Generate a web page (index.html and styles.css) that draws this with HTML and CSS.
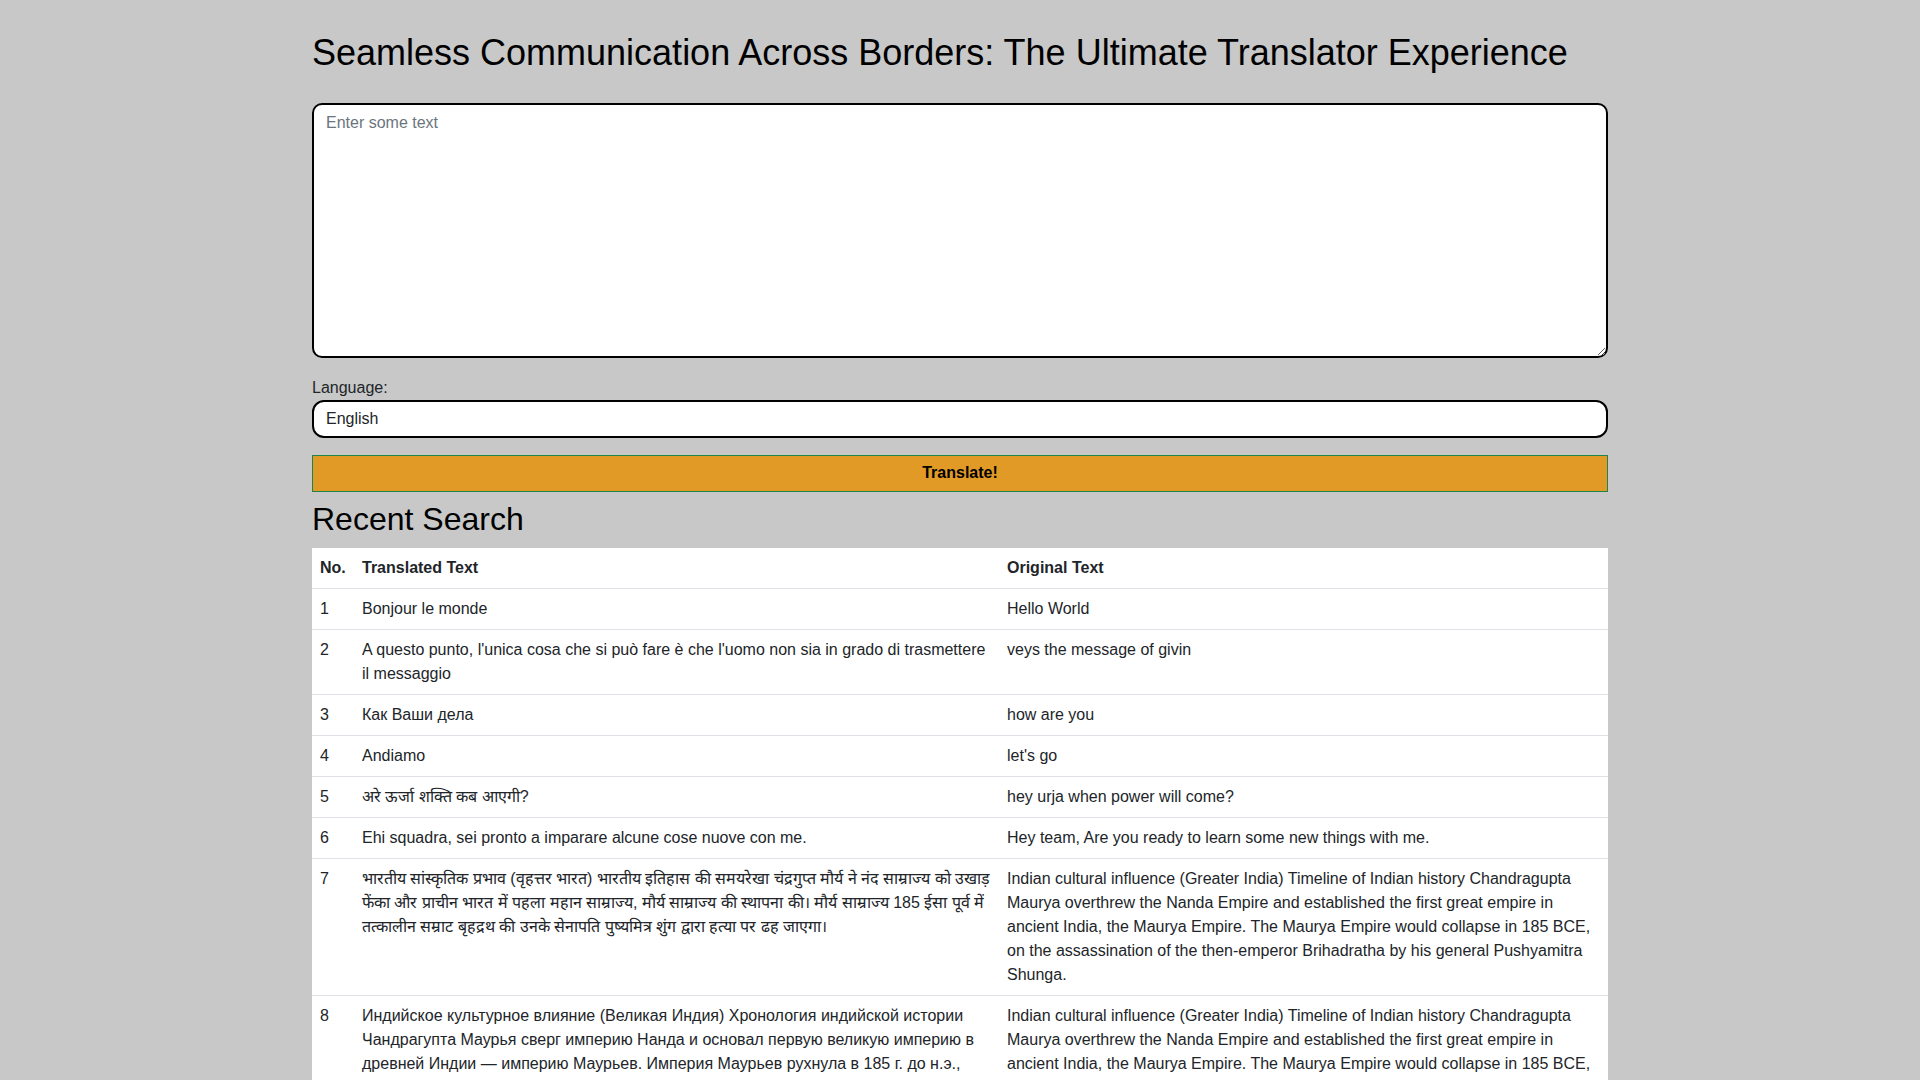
FILE: index.html
```html
<!DOCTYPE html>
<html lang="en">
<head>
<meta charset="utf-8">
<title>Translator</title>
<link rel="stylesheet" href="styles.css">
</head>
<body>
<main class="container">
  <h1 class="title">Seamless Communication Across Borders: The Ultimate Translator Experience</h1>
  <form class="translate-form">
    <textarea class="text-input" placeholder="Enter some text"></textarea>
    <label class="lang-label" for="lang">Language:</label>
    <input class="lang-input" id="lang" type="text" value="English">
    <button class="translate-btn" type="button">Translate!</button>
  </form>
  <h2 class="section-title">Recent Search</h2>
  <table class="history">
    <thead>
      <tr><th class="col-no">No.</th><th class="col-tr">Translated Text</th><th>Original Text</th></tr>
    </thead>
    <tbody>
      <tr><td>1</td><td>Bonjour le monde</td><td>Hello World</td></tr>
      <tr><td>2</td><td>A questo punto, l'unica cosa che si può fare è che l'uomo non sia in grado di trasmettere il messaggio</td><td>veys the message of givin</td></tr>
      <tr><td>3</td><td>Как Ваши дела</td><td>how are you</td></tr>
      <tr><td>4</td><td>Andiamo</td><td>let's go</td></tr>
      <tr><td>5</td><td>अरे ऊर्जा शक्ति कब आएगी?</td><td>hey urja when power will come?</td></tr>
      <tr><td>6</td><td>Ehi squadra, sei pronto a imparare alcune cose nuove con me.</td><td>Hey team, Are you ready to learn some new things with me.</td></tr>
      <tr><td>7</td><td>भारतीय सांस्कृतिक प्रभाव (वृहत्तर भारत) भारतीय इतिहास की समयरेखा चंद्रगुप्त मौर्य ने नंद साम्राज्य को उखाड़ फेंका और प्राचीन भारत में पहला महान साम्राज्य, मौर्य साम्राज्य की स्थापना की। मौर्य साम्राज्य 185 ईसा पूर्व में तत्कालीन सम्राट बृहद्रथ की उनके सेनापति पुष्यमित्र शुंग द्वारा हत्या पर ढह जाएगा।</td><td>Indian cultural influence (Greater India) Timeline of Indian history Chandragupta Maurya overthrew the Nanda Empire and established the first great empire in ancient India, the Maurya Empire. The Maurya Empire would collapse in 185 BCE, on the assassination of the then-emperor Brihadratha by his general Pushyamitra Shunga.</td></tr>
      <tr><td>8</td><td>Индийское культурное влияние (Великая Индия) Хронология индийской истории Чандрагупта Маурья сверг империю Нанда и основал первую великую империю в древней Индии — империю Маурьев. Империя Маурьев рухнула в 185 г. до н.э., после убийства тогдашнего императора Брихадратхи его полководцем Пушьямитрой Шунгой.</td><td>Indian cultural influence (Greater India) Timeline of Indian history Chandragupta Maurya overthrew the Nanda Empire and established the first great empire in ancient India, the Maurya Empire. The Maurya Empire would collapse in 185 BCE, on the assassination of the then-emperor Brihadratha by his general Pushyamitra Shunga.</td></tr>
    </tbody>
  </table>
</main>
</body>
</html>
```

FILE: styles.css
```css
html {
  background: #c8c8c8;
}
body {
  margin: 8px;
  font-family: "Liberation Sans", Arial, sans-serif;
  color: #000;
}
::-webkit-scrollbar {
  width: 4px;
}
::-webkit-scrollbar-track {
  background: #c8c8c8;
}
::-webkit-scrollbar-thumb {
  background: #888;
}
.container {
  width: 1296px;
  margin: 0 auto;
}
.title {
  font-size: 36px;
  font-weight: normal;
  margin: 24px 0 29px;
}
.translate-form {
  display: flex;
  flex-direction: column;
}
.text-input {
  box-sizing: border-box;
  height: 255px;
  border: 2px solid #000;
  border-radius: 10px;
  padding: 9px 12px;
  font-family: "Liberation Sans", Arial, sans-serif;
  font-size: 16px;
  line-height: normal;
  background: #fff;
  resize: vertical;
  margin: 0 0 20.5px;
}
.text-input::placeholder {
  color: #6c757d;
}
.lang-label {
  font-size: 16px;
  color: #212529;
  line-height: 18px;
  margin-bottom: 3px;
}
.lang-input {
  box-sizing: border-box;
  height: 38px;
  border: 2px solid #000;
  border-radius: 12px;
  padding: 0 12px;
  font-family: "Liberation Sans", Arial, sans-serif;
  font-size: 16px;
  color: #212529;
  background: #fff;
  margin: 0 0 17px;
}
.translate-btn {
  box-sizing: border-box;
  height: 37px;
  border: 1px solid #1e8449;
  background: #e29a27;
  font-family: "Liberation Sans", Arial, sans-serif;
  font-size: 16px;
  font-weight: bold;
  color: #000;
}
.section-title {
  font-size: 32px;
  font-weight: normal;
  margin: 9px 0 10px;
  line-height: 37px;
}
.history {
  width: 100%;
  table-layout: fixed;
  border-collapse: collapse;
  background: #fff;
  color: #212529;
  font-size: 16px;
  line-height: 24px;
}
.history th,
.history td {
  padding: 8px;
  text-align: left;
  vertical-align: top;
  border-bottom: 1px solid #dee2e6;
}
.history th {
  font-weight: bold;
}
.col-no {
  width: 26px;
}
.col-tr {
  width: 629px;
}
```
